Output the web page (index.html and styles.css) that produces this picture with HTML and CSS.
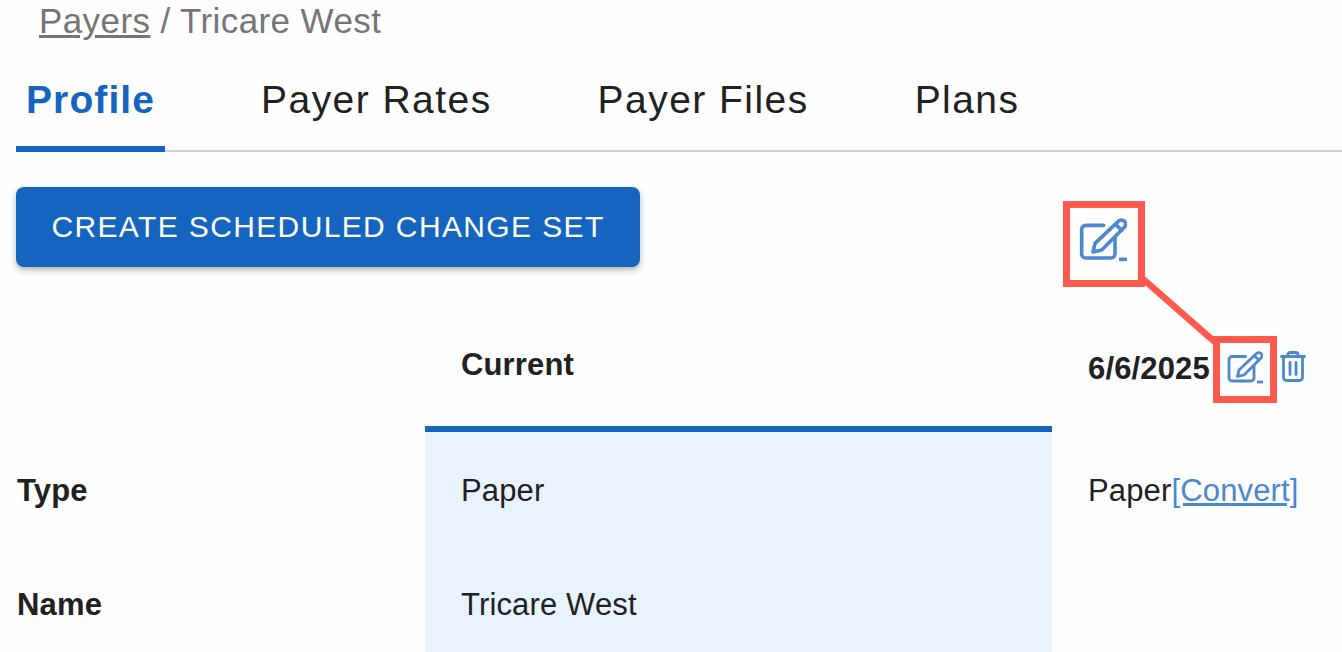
FILE: index.html
```html
<!DOCTYPE html>
<html lang="en">
<head>
  <meta charset="UTF-8">
  <title>Tricare West</title>
  <link rel="stylesheet" href="styles.css">
</head>
<body>
  <div class="page">
    <div class="breadcrumb"><a href="#">Payers</a> / Tricare West</div>

    <div class="tabs">
      <div class="tab active">Profile</div>
      <div class="tab">Payer Rates</div>
      <div class="tab">Payer Files</div>
      <div class="tab">Plans</div>
    </div>

    <div class="toolbar">
      <button class="primary-btn">CREATE SCHEDULED CHANGE SET</button>
    </div>

    <div class="table">
      <div class="cell head"></div>
      <div class="cell head current-head">Current</div>
      <div class="cell head date-head">
        <span>6/6/2025</span>
        <svg class="icon edit-icon" viewBox="0 0 36 33" fill="none" stroke="currentColor" stroke-width="2.8" stroke-linecap="round" stroke-linejoin="round">
          <path d="M18.500 5.500H5a3 3 0 0 0-3 3V27a3 3 0 0 0 3 3h19a3 3 0 0 0 3-3V15"/>
          <path d="M29.500 2.500a3 3 0 0 1 4.500 4.500L17 24l-6.500 1.500L12 19z"/>
          <path d="M27.500 5l4.500 4"/>
          <path d="M30 31h6" stroke-linecap="butt"/>
        </svg>
        <svg class="icon trash-icon" viewBox="0 0 26 31" fill="none" stroke="currentColor" stroke-width="2.8" stroke-linecap="round" stroke-linejoin="round">
          <path d="M1.500 5.500h23"/>
          <path d="M8 5.500V3.500a2 2 0 0 1 2-2h6a2 2 0 0 1 2 2v2"/>
          <path d="M3.500 5.500V26.500a3 3 0 0 0 3 3h13a3 3 0 0 0 3-3V5.500"/>
          <path d="M10 11.500v12M16 11.500v12"/>
        </svg>
      </div>

      <div class="cell label">Type</div>
      <div class="cell current">Paper</div>
      <div class="cell">Paper<a href="#">[Convert]</a></div>

      <div class="cell label">Name</div>
      <div class="cell current">Tricare West</div>
      <div class="cell"></div>
    </div>
  </div>

  <!-- annotation drawn over the screenshot -->
  <svg class="callout-line" width="1342" height="652" viewBox="0 0 1342 652">
    <path d="M1143 279L1216 343" stroke="#fd5a4d" stroke-width="6.5" fill="none"/>
  </svg>
  <div class="callout callout-big">
    <svg class="icon-big" viewBox="0 0 36 33" fill="none" stroke="currentColor" stroke-width="2.7" stroke-linecap="round" stroke-linejoin="round">
      <path d="M18.500 5.500H5a3 3 0 0 0-3 3V27a3 3 0 0 0 3 3h19a3 3 0 0 0 3-3V15"/>
      <path d="M29.500 2.500a3 3 0 0 1 4.500 4.500L17 24l-6.500 1.500L12 19z"/>
      <path d="M27.500 5l4.500 4"/>
      <path d="M30 31h6" stroke-linecap="butt"/>
    </svg>
  </div>
  <div class="callout callout-small"></div>
</body>
</html>
```

FILE: styles.css
```css
html, body {
  margin: 0;
  height: 100%;
  overflow: hidden;
}
body {
  font-family: "Liberation Sans", Arial, sans-serif;
  background: #fefefe;
  color: #212121;
}
.page {
  height: 652px;
  overflow: hidden;
}
.breadcrumb {
  height: 42px;
  margin-top: -4px;
  padding-left: 39px;
  font-size: 35px;
  line-height: 50px;
  color: #757575;
  letter-spacing: 0.4px;
}
.breadcrumb a {
  color: inherit;
}
.tabs {
  display: flex;
  margin: 18px 0 0 16px;
  height: 96px;
  box-sizing: border-box;
  border-bottom: 2px solid #cfd3d3;
}
.tab {
  padding: 0 10px;
  margin-right: 86px;
  font-size: 39px;
  line-height: 88px;
  letter-spacing: 1.45px;
  height: 96px;
  box-sizing: border-box;
}
.tab.active {
  color: #1565c0;
  font-weight: bold;
  letter-spacing: 1.1px;
  border-bottom: 6px solid #1565c0;
}
.toolbar {
  padding: 35px 0 0 16px;
}
.primary-btn {
  display: block;
  width: 624px;
  height: 80px;
  border: 0;
  border-radius: 8px;
  background: #1565c0;
  color: #fff;
  font-family: inherit;
  font-size: 30px;
  letter-spacing: 1.37px;
  box-shadow: 0 3px 6px rgba(0, 0, 0, 0.3);
}
.table {
  display: grid;
  grid-template-columns: 409px 627px 1fr;
  grid-template-rows: 165px 114px 114px;
  margin-left: 16px;
}
.cell {
  display: flex;
  align-items: center;
  padding-top: 4px;
  padding-left: 36px;
  font-size: 31px;
  letter-spacing: 0.15px;
}
.cell a {
  color: #4a88d0;
}
.head {
  font-weight: bold;
}
.current-head {
  box-sizing: border-box;
  padding-top: 37px;
  border-bottom: 6px solid #1565c0;
}
.date-head {
  padding-top: 38px;
}
.label {
  padding-left: 1px;
  font-weight: bold;
}
.current {
  background: #e8f3fd;
}
.icon {
  color: #4a88d0;
  flex: none;
}
.edit-icon {
  width: 36px;
  height: 33px;
  margin: 0 0 2px 17px;
}
.trash-icon {
  width: 26px;
  height: 31px;
  margin: 0 0 4px 17px;
}
.callout {
  position: absolute;
  box-sizing: border-box;
  border: 7px solid #fd5a4d;
}
.callout-big {
  left: 1063px;
  top: 201px;
  width: 82px;
  height: 86px;
}
.icon-big {
  position: absolute;
  left: 9px;
  top: 10px;
  width: 48px;
  height: 44px;
  color: #4a88d0;
}
.callout-small {
  left: 1213px;
  top: 336px;
  width: 64px;
  height: 67px;
}
.callout-line {
  position: absolute;
  left: 0;
  top: 0;
}
```
